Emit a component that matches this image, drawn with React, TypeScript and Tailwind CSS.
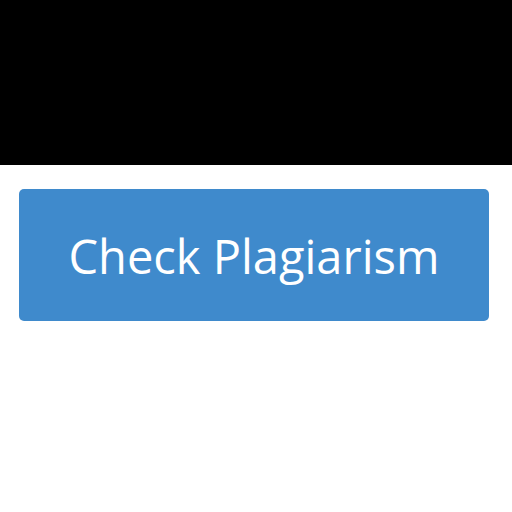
export default function App() {
  return (
    <div className="w-[512px] h-[512px] bg-white flex flex-col" style={{ fontFamily: '"Open Sans", "Noto Sans", sans-serif' }}>
      <div className="h-[165px] bg-black" />
      <div className="pt-[24px] pl-[19px]">
        <button className="w-[470px] h-[132px] rounded-[5px] bg-[#3f8acc] text-white text-[47px] leading-none flex items-center justify-center pt-[2px]">
          Check Plagiarism
        </button>
      </div>
    </div>
  );
}
